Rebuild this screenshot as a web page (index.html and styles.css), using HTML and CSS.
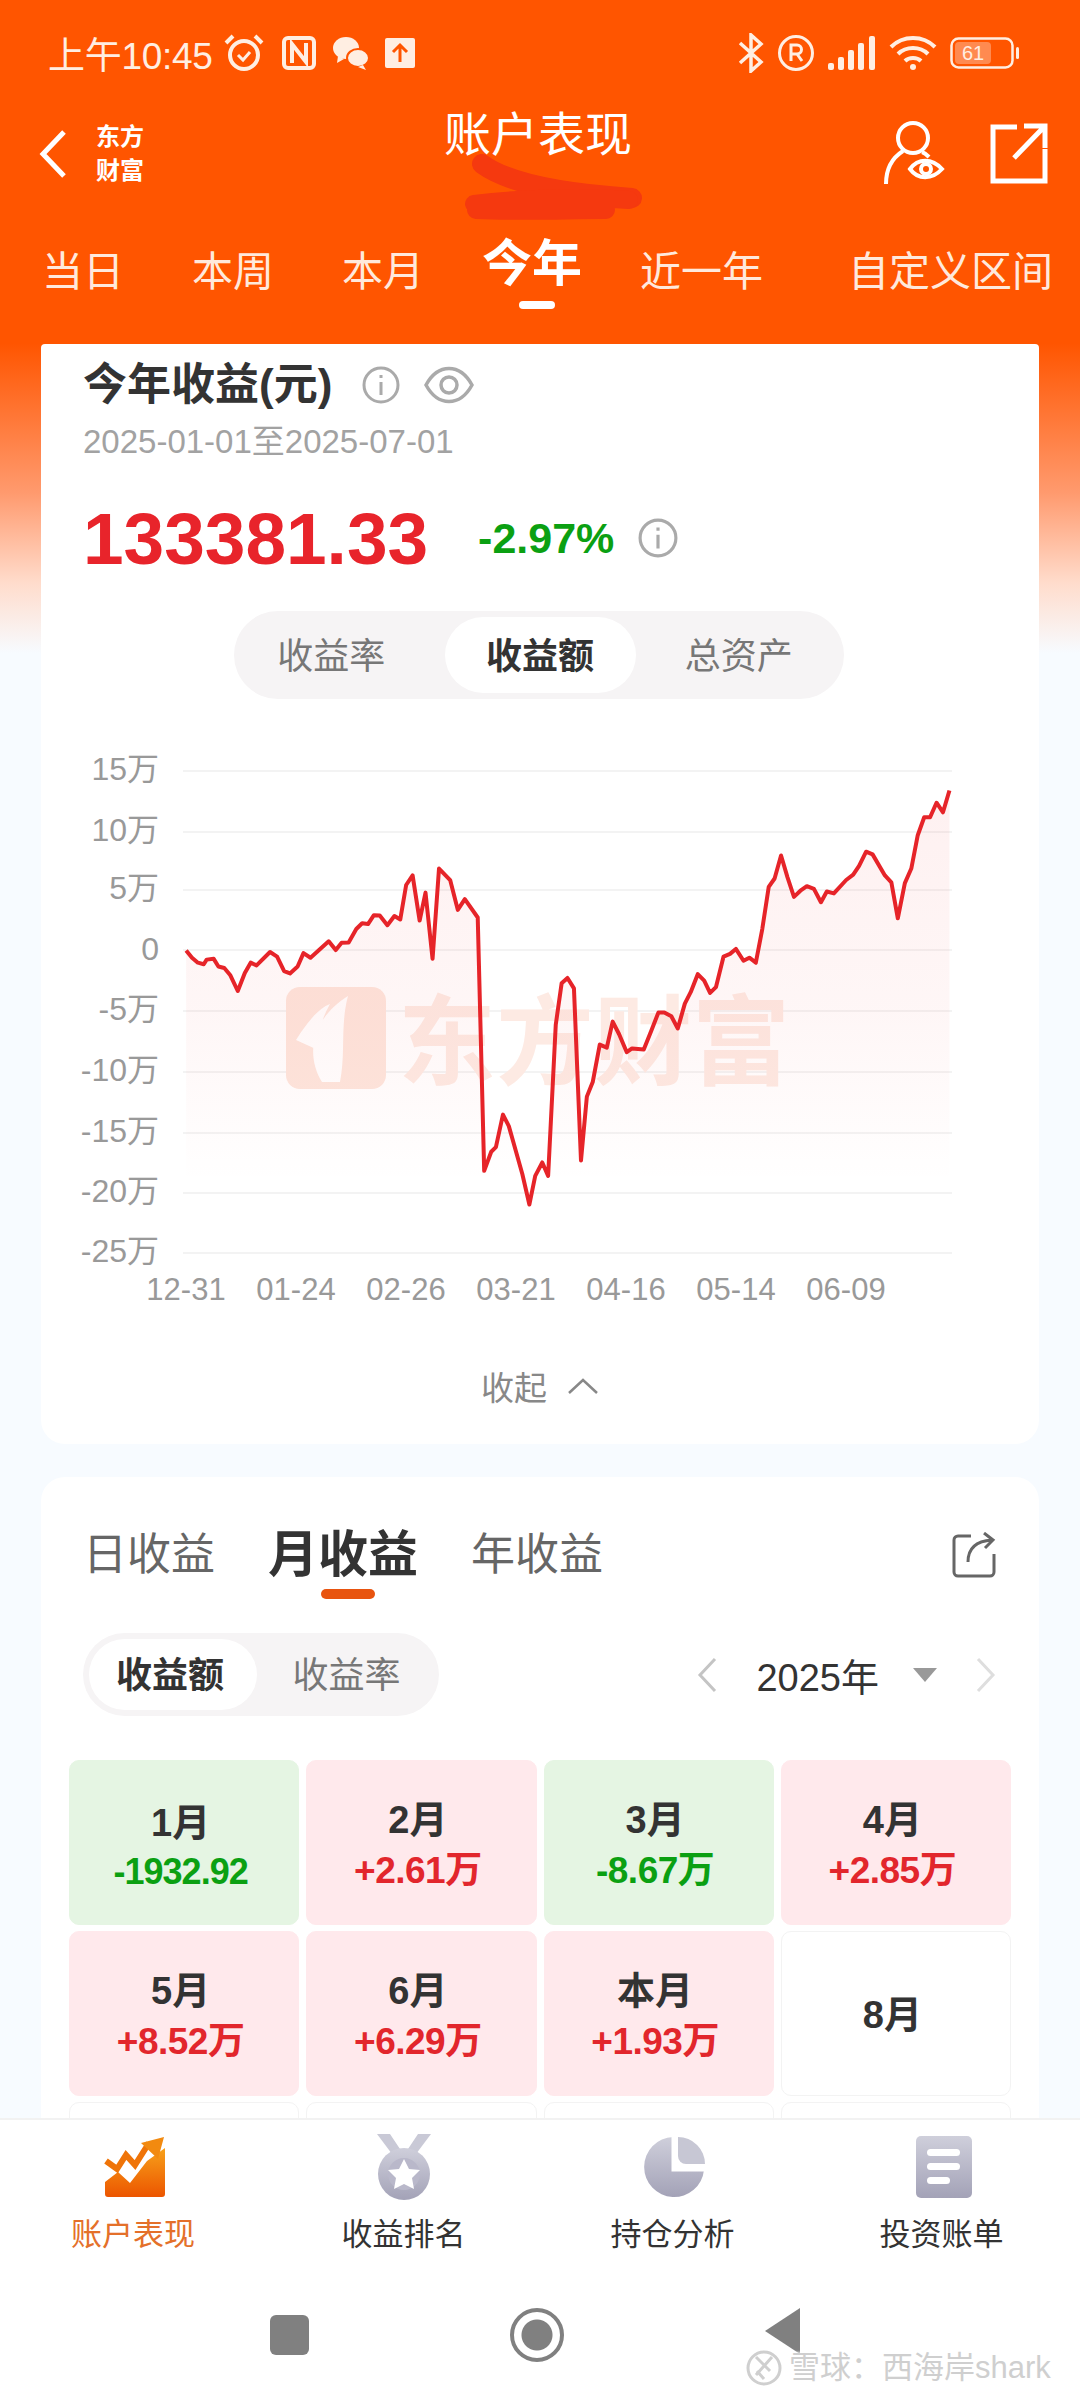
FILE: index.html
```html
<!DOCTYPE html>
<html>
	<head>
		<meta charset="UTF-8">
		<title>账户表现</title>
		<link rel="stylesheet" href="styles.css">
	</head>
	<body>
		<div class="page">
			<!-- 顶部橙色区域 -->
			<header class="header">
				<div class="status">
					<span class="time">上午10:45</span>
					<svg class="st-icon" width="42" height="42" viewBox="0 0 42 42" fill="none" stroke="#ffeee2" stroke-width="4"><circle cx="21" cy="23" r="14"/><path d="M15 23l5 5 7-8" stroke-width="3"/><path d="M3 11l7-7M39 11l-7-7"/></svg>
					<svg class="st-icon" width="36" height="36" viewBox="0 0 36 36" fill="none" stroke="#ffeee2" stroke-width="4"><rect x="3" y="3" width="30" height="30" rx="4"/><path d="M11 28V9l14 18V8"/></svg>
					<svg class="st-icon" width="36" height="36" viewBox="0 0 36 36" fill="#ffeee2"><ellipse cx="13" cy="13" rx="13" ry="11"/><ellipse cx="25" cy="23" rx="11" ry="9" stroke="#ff5500" stroke-width="2"/><path d="M5 21l-1 7 7-4zM30 30l3 5-8-3z"/></svg>
					<svg class="st-icon" width="30" height="30" viewBox="0 0 30 30"><rect width="30" height="30" rx="2" fill="#ffeee2"/><path d="M15 24V8M8 14l7-7 7 7" fill="none" stroke="#ff5500" stroke-width="3"/></svg>
					<span class="status-right">
						<svg width="26" height="40" viewBox="0 0 26 40" fill="none" stroke="#ffeee2" stroke-width="3.5"><path d="M2 10l21 19-10 9V2l10 9L2 30"/></svg>
						<svg width="38" height="38" viewBox="0 0 38 38" fill="none" stroke="#ffeee2" stroke-width="3"><circle cx="19" cy="19" r="16.5"/><path d="M14 27V11h6a4.500 4.500 0 0 1 0 9h-6M20 20l5 7"/></svg>
						<svg width="48" height="34" viewBox="0 0 48 34" fill="#ffeee2"><rect x="0" y="27" width="6" height="7" rx="2"/><rect x="10" y="21" width="6" height="13" rx="2"/><rect x="20" y="14" width="6" height="20" rx="2"/><rect x="30" y="7" width="6" height="27" rx="2"/><rect x="41" y="0" width="6" height="34" rx="2"/></svg>
						<svg width="48" height="36" viewBox="0 0 48 36" fill="none" stroke="#ffeee2" stroke-width="4"><path d="M2 12c12-12 32-12 44 0M9 19c8-8 22-8 30 0M16 26c4-4 12-4 16 0"/><circle cx="24" cy="32" r="3" fill="#ffeee2" stroke="none"/></svg>
						<svg width="70" height="32" viewBox="0 0 70 32"><rect x="1.500" y="1.500" width="61" height="29" rx="7" fill="none" stroke="#ffeee2" stroke-width="2.500"/><rect x="5" y="5" width="36" height="22" rx="4" fill="#ff8a50"/><rect x="66" y="10" width="3" height="12" rx="1.500" fill="#ffeee2"/><text class="batt" x="23" y="23">61</text></svg>
					</span>
				</div>
				<div class="titlebar">
					<svg class="back" width="30" height="50" viewBox="0 0 30 50" fill="none" stroke="#fff" stroke-width="5"><path d="M26 3L5 25l21 22"/></svg>
					<div class="brand">东方<br>财富</div>
					<h1 class="title">账户表现</h1>
					<svg class="scribble" width="190" height="70" viewBox="0 0 190 70" fill="none" stroke="#f5390f" stroke-linecap="round"><path d="M20 10c30 22 90 30 150 34" stroke-width="20"/><path d="M12 50c50-6 110-8 155-4M14 56c50 2 90 0 130 0" stroke-width="18"/></svg>
					<svg class="tool-user" width="62" height="68" viewBox="0 0 62 68" fill="none" stroke="#fff" stroke-width="4"><circle cx="29" cy="18" r="15"/><path d="M2 64c0-16 6-26 17-33M38 32c3 1 5 3 7 5"/><path d="M26 49c8-11 22-11 32 0-10 11-24 11-32 0z"/><circle cx="42" cy="49" r="5"/></svg>
					<svg class="tool-share" width="58" height="62" viewBox="0 0 58 62" fill="none" stroke="#fff" stroke-width="5"><path d="M27 4H3v54h52V26"/><path d="M24 35L54 4M34 3h21v22"/></svg>
				</div>
				<div class="ranges">
					<span class="range">当日</span>
					<span class="range">本周</span>
					<span class="range">本月</span>
					<span class="range active">今年</span>
					<span class="range">近一年</span>
					<span class="range last">自定义区间</span>
				</div>
			</header>

			<main class="scroll">
				<section class="card card-chart">
					<div class="card-head">
						<h2 class="card-title">今年收益(元)</h2>
						<svg class="info" width="38" height="38" viewBox="0 0 38 38" fill="none" stroke="#aaa" stroke-width="3"><circle cx="19" cy="19" r="17"/><path d="M19 16v13M19 9v3"/></svg>
						<svg class="eye" width="50" height="42" viewBox="0 0 50 42" fill="none" stroke="#aaa" stroke-width="3.500"><path d="M2 21C14 -1 36 -1 48 21 36 43 14 43 2 21z"/><circle cx="25" cy="21" r="8"/></svg>
					</div>
					<div class="dates">2025-01-01至2025-07-01</div>
					<div class="sum-row">
						<span class="sum">133381.33</span>
						<span class="pct">-2.97%</span>
						<svg class="info-2" width="40" height="40" viewBox="0 0 38 38" fill="none" stroke="#aaa" stroke-width="3"><circle cx="19" cy="19" r="17"/><path d="M19 16v13M19 9v3"/></svg>
					</div>
					<div class="seg">
						<span class="seg-item">收益率</span>
						<span class="seg-item on">收益额</span>
						<span class="seg-item">总资产</span>
					</div>

					<svg class="chart" width="998" height="600" viewBox="41 730 998 600">
						<defs>
							<linearGradient id="areaFill" x1="0" y1="0" x2="0" y2="1">
								<stop offset="0" stop-color="#f03030" stop-opacity=".07"/>
								<stop offset=".5" stop-color="#f03030" stop-opacity=".04"/>
								<stop offset=".85" stop-color="#f03030" stop-opacity="0"/>
							</linearGradient>
						</defs>
						<g class="grid-lines">
							<path d="M183 771H952M183 832H952M183 890H952M183 950H952M183 1011H952M183 1072H952M183 1133H952M183 1193H952M183 1253H952"/>
						</g>
						<!-- 水印 -->
						<rect x="286" y="987" width="100" height="102" rx="14" fill="#fde6dd"/>
						<path d="M322 1082c-16-26-12-62 26-86-8 30-2 56-8 86zM296 1040c14-22 24-32 34-36-8 14-12 28-12 46z" fill="#fff"/>
						<text class="mark" x="398" y="1077">东方财富</text>

						<polygon fill="url(#areaFill)" transform="matrix(.5867 0 0 .3827 60 730)" points="215,576 225,595 235,608 245,612 250,600 262,598 270,618 280,622 290,640 303,682 315,635 325,608 335,615 358,580 370,592 382,630 392,636 405,618 415,583 427,595 458,552 470,575 480,556 492,555 505,520 515,505 525,507 535,484 545,485 558,510 570,486 580,495 590,405 601,380 613,498 623,425 635,598 646,362 665,392 678,470 690,442 712,490 723,1152 735,1102 743,1090 755,1005 765,1035 788,1160 800,1240 810,1165 822,1130 832,1165 845,770 855,662 865,648 876,675 888,1125 898,958 908,920 920,822 932,830 942,762 953,795 966,842 975,832 995,835 1008,785 1020,738 1030,738 1042,748 1053,780 1065,715 1075,685 1087,638 1098,655 1108,687 1118,672 1131,592 1142,585 1152,572 1165,603 1175,595 1186,608 1197,520 1208,410 1218,388 1229,328 1240,385 1251,436 1262,420 1273,408 1285,415 1297,450 1307,422 1319,427 1340,392 1352,378 1362,355 1374,318 1385,325 1406,380 1417,398 1428,492 1440,400 1451,362 1462,275 1473,228 1483,228 1494,190 1505,215 1516,158 1516,1368 215,1368"/>
						<polyline class="line" transform="matrix(.5867 0 0 .3827 60 730)" points="215,576 225,595 235,608 245,612 250,600 262,598 270,618 280,622 290,640 303,682 315,635 325,608 335,615 358,580 370,592 382,630 392,636 405,618 415,583 427,595 458,552 470,575 480,556 492,555 505,520 515,505 525,507 535,484 545,485 558,510 570,486 580,495 590,405 601,380 613,498 623,425 635,598 646,362 665,392 678,470 690,442 712,490 723,1152 735,1102 743,1090 755,1005 765,1035 788,1160 800,1240 810,1165 822,1130 832,1165 845,770 855,662 865,648 876,675 888,1125 898,958 908,920 920,822 932,830 942,762 953,795 966,842 975,832 995,835 1008,785 1020,738 1030,738 1042,748 1053,780 1065,715 1075,685 1087,638 1098,655 1108,687 1118,672 1131,592 1142,585 1152,572 1165,603 1175,595 1186,608 1197,520 1208,410 1218,388 1229,328 1240,385 1251,436 1262,420 1273,408 1285,415 1297,450 1307,422 1319,427 1340,392 1352,378 1362,355 1374,318 1385,325 1406,380 1417,398 1428,492 1440,400 1451,362 1462,275 1473,228 1483,228 1494,190 1505,215 1516,158"/>

						<g class="axis-y">
							<text x="159" y="780">15万</text>
							<text x="159" y="841">10万</text>
							<text x="159" y="899">5万</text>
							<text x="159" y="960">0</text>
							<text x="159" y="1020">-5万</text>
							<text x="159" y="1081">-10万</text>
							<text x="159" y="1142">-15万</text>
							<text x="159" y="1202">-20万</text>
							<text x="159" y="1262">-25万</text>
						</g>
						<g class="axis-x">
							<text x="186" y="1300">12-31</text>
							<text x="296" y="1300">01-24</text>
							<text x="406" y="1300">02-26</text>
							<text x="516" y="1300">03-21</text>
							<text x="626" y="1300">04-16</text>
							<text x="736" y="1300">05-14</text>
							<text x="846" y="1300">06-09</text>
						</g>
					</svg>

					<div class="fold">
						<span>收起</span>
						<svg width="32" height="18" viewBox="0 0 32 18" fill="none" stroke="#888" stroke-width="2.500"><path d="M2 16L16 3l14 13"/></svg>
					</div>
				</section>

				<section class="card card-month">
					<div class="kinds">
						<span class="kind">日收益</span>
						<span class="kind active">月收益</span>
						<span class="kind">年收益</span>
						<svg class="kind-share" width="46" height="46" viewBox="0 0 46 46" fill="none" stroke="#666" stroke-width="3"><path d="M20 4H7a4 4 0 0 0-4 4v32a4 4 0 0 0 4 4h32a4 4 0 0 0 4-4V22"/><path d="M17 30c0-14 8-21 24-22M33 1l9 7-8 8"/></svg>
					</div>
					<div class="filter">
						<div class="toggle">
							<span class="toggle-item on">收益额</span>
							<span class="toggle-item">收益率</span>
						</div>
						<div class="year">
							<svg width="22" height="36" viewBox="0 0 22 36" fill="none" stroke="#c4c4c4" stroke-width="3"><path d="M19 2L4 18l15 16"/></svg>
							<span class="year-text">2025年</span>
							<span class="caret"></span>
							<svg width="22" height="36" viewBox="0 0 22 36" fill="none" stroke="#dedede" stroke-width="3"><path d="M3 2l15 16L3 34"/></svg>
						</div>
					</div>
					<div class="months">
						<div class="cell down"><b class="low">1月</b><em class="tight">-1932.92</em></div>
						<div class="cell up"><b>2月</b><em>+2.61万</em></div>
						<div class="cell down"><b>3月</b><em>-8.67万</em></div>
						<div class="cell up"><b>4月</b><em>+2.85万</em></div>
						<div class="cell up"><b>5月</b><em>+8.52万</em></div>
						<div class="cell up"><b>6月</b><em>+6.29万</em></div>
						<div class="cell up"><b>本月</b><em>+1.93万</em></div>
						<div class="cell"><b>8月</b></div>
						<div class="cell"></div>
						<div class="cell"></div>
						<div class="cell"></div>
						<div class="cell"></div>
					</div>
				</section>
			</main>

			<nav class="tabbar">
				<div class="tab on">
					<svg width="62" height="62" viewBox="0 0 62 62">
						<defs><linearGradient id="tabOrange" x1="0" y1="0" x2="0" y2="1"><stop offset="0" stop-color="#f7a11a"/><stop offset="1" stop-color="#ec5500"/></linearGradient></defs>
						<path d="M1 46l13-10 12 11 17-22 18-13v46a3 3 0 0 1-3 3H4a3 3 0 0 1-3-3z" fill="url(#tabOrange)"/>
						<path d="M2 25l11 8 9-14 9 10 14-22" fill="none" stroke="#ef7408" stroke-width="6"/>
						<path d="M37 7l23-6-6 22z" fill="#f28a10"/>
					</svg>
					<span>账户表现</span>
				</div>
				<div class="tab">
					<svg width="56" height="66" viewBox="0 0 56 66">
						<defs><linearGradient id="tabGray" x1="0" y1="0" x2="0" y2="1"><stop offset="0" stop-color="#cfcfdb"/><stop offset="1" stop-color="#a3a2b7"/></linearGradient></defs>
						<path d="M1 0h13l10 15h8L42 0h13L40 20H16z" fill="#c9c9d6"/>
						<circle cx="28" cy="40" r="26" fill="url(#tabGray)"/>
						<circle cx="28" cy="40" r="16" fill="#b9b8ca"/>
						<path d="M28 25l5 10 11 1-8 8 2 11-10-5-10 5 2-11-8-8 11-1z" fill="#fff"/>
					</svg>
					<span>收益排名</span>
				</div>
				<div class="tab shift">
					<svg width="62" height="62" viewBox="0 0 62 62">
						<path d="M29 1v33h31A30 30 0 1 1 29 1z" fill="url(#tabGray)"/>
						<path d="M34 1a27 27 0 0 1 27 27H42a8 8 0 0 1-8-8z" fill="#c7c7d4"/>
						<path d="M29 1v33h31" fill="none" stroke="#fff" stroke-width="3"/>
					</svg>
					<span>持仓分析</span>
				</div>
				<div class="tab shift">
					<svg width="56" height="62" viewBox="0 0 56 62">
						<rect width="56" height="62" rx="5" fill="url(#tabGray)"/>
						<rect x="11" y="13" width="33" height="7" rx="3.500" fill="#fff"/>
						<rect x="11" y="27" width="33" height="7" rx="3.500" fill="#fff"/>
						<rect x="11" y="41" width="23" height="7" rx="3.500" fill="#fff"/>
					</svg>
					<span>投资账单</span>
				</div>
			</nav>

			<div class="sysbar">
				<span class="sys-square"></span>
				<span class="sys-circle"></span>
				<span class="sys-back"></span>
			</div>

			<div class="watermark">
				<svg width="38" height="38" viewBox="0 0 38 38" fill="none" stroke="#cfcfcf" stroke-width="3"><circle cx="19" cy="19" r="16"/><path d="M11 8l14 14M27 8L11 26M19 30l-7-8"/></svg>
				<span>雪球：西海岸shark</span>
			</div>
		</div>
	</body>
</html>
```

FILE: styles.css
```css
*{
	margin: 0;
	padding: 0;
	box-sizing: border-box;
}
body{
	width: 1080px;
	height: 2400px;
	overflow: hidden;
	font-family: "Liberation Sans", "Noto Sans CJK SC", sans-serif;
	color: #333;
}
.page{
	width: 1080px;
	height: 2400px;
	display: flex;
	flex-direction: column;
	position: relative;
	overflow: hidden;
	background: #fff;
}

/* 顶部 */
.header{
	height: 343px;
	flex: none;
	background: #ff5500;
	color: #fff;
}
.status{
	height: 88px;
	padding: 18px 60px 0 48px;
	display: flex;
	align-items: center;
	gap: 16px;
	color: #ffeee2;
}
.time{
	font-size: 37px;
	letter-spacing: -.3px;
	margin-right: -6px;
}
.status-right{
	margin-left: auto;
	display: flex;
	align-items: center;
	gap: 13px;
}
.batt{
	font-size: 20px;
	fill: #ffeee2;
	text-anchor: middle;
}
.titlebar{
	height: 132px;
	position: relative;
	display: flex;
	align-items: center;
	padding: 0 32px 0 38px;
}
.back{
	flex: none;
}
.brand{
	margin-left: 28px;
	font-size: 24px;
	line-height: 34px;
	font-weight: bold;
}
.title{
	position: absolute;
	left: 0;
	right: 4px;
	top: 17px;
	text-align: center;
	font-size: 47px;
	line-height: 60px;
	font-weight: normal;
}
.scribble{
	position: absolute;
	left: 462px;
	top: 66px;
}
.tool-user{
	margin-left: auto;
}
.tool-share{
	margin-left: 44px;
}
.ranges{
	display: flex;
	align-items: center;
	gap: 68px;
	margin-top: 20px;
	padding-left: 42px;
	height: 64px;
	white-space: nowrap;
}
.range{
	font-size: 41px;
	line-height: 50px;
	color: #ffe9dc;
}
.range.active{
	font-size: 50px;
	font-weight: bold;
	color: #fff;
	margin: -16px -10px 0;
	position: relative;
}
.range.active::after{
	content: "";
	position: absolute;
	left: 37px;
	bottom: -20px;
	width: 36px;
	height: 8px;
	border-radius: 4px;
	background: #fff;
}
.range.last{
	margin-left: 17px;
}

/* 内容 */
.scroll{
	flex: 1;
	min-height: 0;
	overflow: hidden;
	padding: 1px 41px 0;
	background: linear-gradient(#ff5500 0, #ff9a6e 150px, #ffdccc 240px, #f7fbff 310px);
}
.card{
	background: #fff;
	border-radius: 24px;
}
.card-chart{
	height: 1100px;
	border-radius: 4px 4px 24px 24px;
	padding-top: 16px;
}
.card-head{
	display: flex;
	align-items: center;
	padding-left: 42px;
	height: 50px;
}
.card-title{
	font-size: 44px;
	line-height: 50px;
	font-weight: bold;
}
.info{
	margin-left: 30px;
}
.eye{
	margin-left: 24px;
}
.dates{
	margin-top: 12px;
	padding-left: 42px;
	font-size: 33px;
	line-height: 40px;
	color: #a2a2a2;
}
.sum-row{
	margin-top: 36px;
	height: 80px;
	padding-left: 42px;
	display: flex;
	align-items: center;
}
.sum{
	font-size: 73px;
	font-weight: bold;
	color: #e8242b;
}
.pct{
	margin-left: 50px;
	font-size: 43px;
	font-weight: bold;
	color: #0ba012;
}
.info-2{
	margin-left: 24px;
}
.seg{
	width: 610px;
	height: 88px;
	margin: 33px 0 0 193px;
	padding: 6px 0;
	border-radius: 44px;
	background: #f6f4f5;
	display: flex;
}
.seg-item{
	flex: 1;
	text-align: center;
	font-size: 36px;
	line-height: 79px;
	color: #777;
}
.seg-item:first-child{
	padding-right: 4px;
}
.seg-item:last-child{
	padding-right: 8px;
}
.seg-item.on{
	flex: none;
	width: 191px;
	margin: 0 6px 0 12px;
	background: #fff;
	border-radius: 38px;
	color: #333;
	font-weight: bold;
}
.chart{
	display: block;
	margin-top: 31px;
}
.grid-lines path{
	fill: none;
	stroke: #f3f3f3;
	stroke-width: 2;
}
.mark{
	font-size: 98px;
	font-weight: bold;
	fill: #fdeae3;
}
.line{
	fill: none;
	stroke: #e62429;
	stroke-width: 4;
	stroke-linejoin: round;
	vector-effect: non-scaling-stroke;
}
.axis-y text{
	font-size: 32px;
	fill: #999;
	text-anchor: end;
}
.axis-x text{
	font-size: 31px;
	fill: #999;
	text-anchor: middle;
}
.fold{
	margin-top: 36px;
	height: 40px;
	display: flex;
	align-items: center;
	justify-content: center;
	gap: 20px;
	font-size: 33px;
	color: #888;
}

.card-month{
	margin-top: 33px;
	height: 900px;
	padding: 48px 28px 0;
}
.kinds{
	display: flex;
	align-items: center;
	height: 60px;
	padding: 0 14px;
	gap: 53px;
}
.kind{
	font-size: 44px;
	line-height: 60px;
	color: #666;
}
.kind.active{
	font-size: 50px;
	font-weight: bold;
	color: #333;
	position: relative;
}
.kind.active::after{
	content: "";
	position: absolute;
	left: 53px;
	bottom: -14px;
	width: 54px;
	height: 10px;
	border-radius: 5px;
	background: #e8540f;
}
.kind-share{
	margin-left: auto;
}
.filter{
	margin-top: 48px;
	padding: 0 14px;
	display: flex;
	align-items: center;
	justify-content: space-between;
}
.toggle{
	width: 356px;
	height: 83px;
	padding: 6px;
	border-radius: 42px;
	background: #f6f4f5;
	display: flex;
}
.toggle-item{
	flex: 1;
	text-align: center;
	font-size: 36px;
	line-height: 74px;
	color: #777;
	padding-left: 3px;
}
.toggle-item.on{
	flex: none;
	width: 168px;
	padding: 0 6px 0 0;
	background: #fff;
	border-radius: 36px;
	font-weight: bold;
	color: #333;
}
.year{
	display: flex;
	align-items: center;
}
.year-text{
	margin: 0 34px 0 38px;
	font-size: 38px;
	color: #333;
}
.caret{
	width: 0;
	height: 0;
	margin-right: 38px;
	border-style: solid;
	border-width: 14px 12px 0;
	border-color: #999 transparent transparent;
}
.months{
	margin-top: 44px;
	display: grid;
	grid-template-columns: repeat(4, 1fr);
	grid-auto-rows: 165px;
	gap: 6px 7px;
}
.cell{
	border: 1px solid #f3f3f3;
	border-radius: 10px;
	display: flex;
	flex-direction: column;
	align-items: center;
	justify-content: center;
	padding: 2px 7px 0 0;
}
.cell.up{
	background: #ffe9ec;
	border-color: #ffe9ec;
	color: #e2262c;
}
.cell.down{
	background: #e5f5e3;
	border-color: #e5f5e3;
	color: #0ba012;
}
.cell b{
	font-size: 38px;
	line-height: 46px;
	color: #333;
}
.cell b.low{
	margin-top: 4px;
}
.cell em{
	font-style: normal;
	font-weight: bold;
	font-size: 37px;
	letter-spacing: -.5px;
	line-height: 40px;
	margin-top: 8px;
}
.cell em.tight{
	margin-top: 6px;
	font-size: 36px;
	letter-spacing: -1px;
}

/* 底部导航 */
.tabbar{
	height: 156px;
	flex: none;
	position: relative;
	background: #fff;
	border-top: 2px solid #f2f2f2;
	display: grid;
	grid-template-columns: repeat(4, 1fr);
	padding: 14px 4px 0 0;
}
.tab{
	display: flex;
	flex-direction: column;
	align-items: center;
	font-size: 31px;
	color: #333;
}
.tab svg{
	height: 66px;
}
.tab.shift svg{
	margin-left: 5px;
}
.tab span{
	margin-top: 14px;
	line-height: 42px;
}
.tab.on span{
	color: #e4702a;
	margin-left: -3px;
}
.sysbar{
	height: 126px;
	flex: none;
	background: #fff;
	display: flex;
	align-items: flex-start;
	padding: 34px 0 0 270px;
}
.sys-square{
	width: 39px;
	height: 40px;
	margin-top: 7px;
	border-radius: 6px;
	background: #808080;
}
.sys-circle{
	width: 54px;
	height: 54px;
	margin: 0 0 0 201px;
	border: 4px solid #808080;
	border-radius: 50%;
	background: radial-gradient(circle, #808080 15px, #fff 16px);
}
.sys-back{
	width: 0;
	height: 0;
	margin-left: 201px;
	border-style: solid;
	border-width: 23px 35px 23px 0;
	border-color: transparent #808080 transparent transparent;
}
.watermark{
	position: absolute;
	left: 745px;
	top: 2346px;
	display: flex;
	align-items: center;
	gap: 6px;
	font-size: 31px;
	line-height: 44px;
	color: #cfcfcf;
	text-shadow: 0 0 3px #fff, 0 0 3px #fff;
}
```
